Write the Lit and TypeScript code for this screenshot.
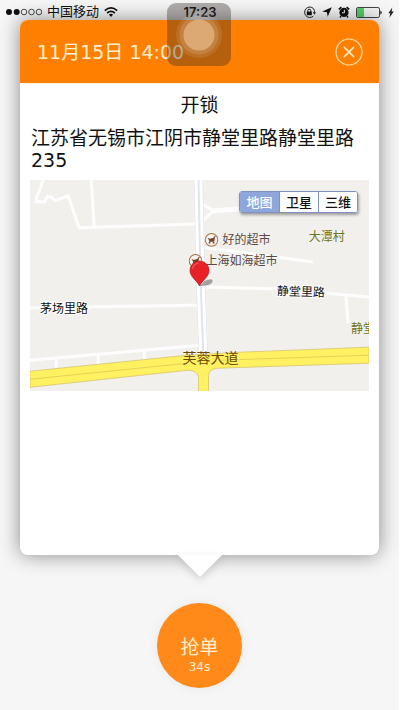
import { LitElement, css, html } from "lit";
import { customElement, state } from "lit/decorators.js";
import { classMap } from "lit/directives/class-map.js";

@customElement("status-bar")
class StatusBar extends LitElement {
  static styles = css`
    :host {
      display: grid;
      grid-template-columns: 1fr auto 1fr;
      align-items: center;
      height: 20px;
      padding: 3px 5px 0 6px;
      box-sizing: border-box;
      font: 13px/18px "Liberation Sans", "Noto Sans CJK SC", sans-serif;
      color: #111;
    }
    .side {
      display: flex;
      align-items: center;
      gap: 5px;
    }
    .right {
      justify-content: flex-end;
      gap: 6px;
    }
    .time {
      font-family: Inter, sans-serif;
      font-weight: 600;
      font-size: 13px;
    }
    svg {
      display: block;
    }
  `;
  render() {
    return html`
      <div class="side">
        <svg width="36" height="8" viewBox="0 0 36 8" aria-hidden="true">
          <g fill="#111"><circle cx="3" cy="4" r="3" /><circle cx="10.7" cy="4" r="3" /></g>
          <g fill="none" stroke="#222" stroke-width=".8">
            <circle cx="18" cy="4" r="2.8" /><circle cx="25.5" cy="4" r="2.8" /><circle cx="33" cy="4" r="2.8" />
          </g>
        </svg>
        <span>中国移动</span>
        <svg width="14" height="10" viewBox="0 0 14 10" aria-hidden="true">
          <g fill="none" stroke="#111" stroke-width="1.7">
            <path d="M.8 3.6Q7-1.8 13.2 3.6" /><path d="M3.1 6Q7 2.6 10.9 6" />
          </g>
          <path d="M4.9 7.6Q7 5.9 9.1 7.6L7 9.9z" fill="#111" />
        </svg>
      </div>
      <span class="time">17:23</span>
      <div class="side right">
        <svg width="13" height="13" viewBox="0 0 13 13" aria-hidden="true">
          <path d="M10.4 2.5A5.2 5.2 0 1 0 10.2 10.2" fill="none" stroke="#222" />
          <path d="M10.4 2.5A5.2 5.2 0 0 1 11.4 6.5" fill="none" stroke="#222" />
          <path d="M9.8 6.3h3.2l-1.6 2.4z" fill="#222" />
          <rect x="3.8" y="5.6" width="5" height="3.6" fill="#111" />
          <path d="M4.8 6V4.7a1.5 1.5 0 0 1 3 0V6" fill="none" stroke="#111" />
        </svg>
        <svg width="10" height="10" viewBox="0 0 10 10" aria-hidden="true">
          <path d="M9.8.3L5.7 9.8 4.9 5.3.2 4.6z" fill="#111" />
        </svg>
        <svg width="12" height="12" viewBox="0 0 12 12" aria-hidden="true">
          <circle cx="6" cy="6.4" r="4.6" fill="#111" />
          <path d="M.8 3.3L3.4 1.1M11.2 3.3L8.600 1.1M3 10.2l-1 1.2M9 10.2l1 1.2" stroke="#111" stroke-width="1.6" />
          <path d="M6.4 3.800v3H4" fill="none" stroke="#eee" />
        </svg>
        <svg width="26" height="11" viewBox="0 0 26 11" aria-hidden="true">
          <rect x=".5" y=".5" width="23" height="10" rx="1.6" fill="#f2f2f2" stroke="#444" />
          <rect x="1" y="1" width="7" height="9" rx="1" fill="#4fd064" />
          <path d="M24.3 3.4q1.4.3 1.4 2.1t-1.4 2.1z" fill="#222" />
        </svg>
        <svg width="6" height="11" viewBox="0 0 6 11" aria-hidden="true">
          <path d="M4.3.4L.3 6.3h2L1.4 10.7 5.8 4.6H3.6z" fill="#222" />
        </svg>
      </div>
    `;
  }
}

@customElement("order-map")
class OrderMap extends LitElement {
  @state() private mode = "地图";

  static styles = css`
    :host {
      display: block;
      position: relative;
    }
    .canvas {
      display: block;
      width: 100%;
      height: 211px;
      background: #f1f0ed;
      font: 12px "Noto Sans CJK SC", sans-serif;
    }
    .road {
      fill: none;
      stroke: #fdfdfd;
      stroke-width: 3;
    }
    .poi {
      fill: #5c4a42;
    }
    .street {
      fill: #111;
      stroke: #fff;
      stroke-width: 2;
      paint-order: stroke;
    }
    .village {
      fill: #6f7420;
    }
    .avenue {
      fill: #6e4c08;
      font-size: 14px;
    }
    .modes {
      position: absolute;
      top: 11px;
      right: 11px;
      display: flex;
      border: 1px solid #8191bd;
      border-radius: 3px;
      overflow: hidden;
      box-shadow: 1px 2px 3px rgba(0, 0, 0, 0.35);
    }
    .mode {
      width: 39px;
      height: 20px;
      padding: 0;
      border: 0;
      border-left: 1px solid #8191bd;
      background: #fff;
      color: #111;
      font: 500 13px/20px "Noto Sans CJK SC", sans-serif;
    }
    .mode:first-child {
      border-left: 0;
    }
    .active {
      background: #8ea6dc;
      color: #fff;
    }
  `;
  render() {
    const cart = (x: number, y: number) => {
      return html`<svg x=${x} y=${y} width="14" height="14" viewBox="0 0 14 14">
        <circle cx="7" cy="7" r="6.3" fill="#f7f2ec" stroke="#a3724e" />
        <path d="M10.900 3.300L9.800 4.400 9.300 8.500H4.600" fill="none" stroke="#704326" />
        <path d="M3 5l2.400 1L9.800 4.600 9.300 8.200H5z" fill="#704326" />
        <circle cx="5" cy="9.800" r=".9" fill="#704326" /><circle cx="9" cy="9.800" r=".9" fill="#704326" />
      </svg>`;
    };
    return html`
      <svg class="canvas" viewBox="0 0 338 211" preserveAspectRatio="xMidYMid slice" role="img" aria-label="地图">
        <g class="road">
          <path d="M13 0L10 10 7 16 6 22 15 22 17 17 21 17 25 21 38 16 49 48 172 44" />
          <path d="M61 0L64 47" />
          <path d="M168 22L183 31 168 45" />
          <path d="M183 31L212 29" stroke-width="5" />
          <path d="M170 67L282 82" />
          <path d="M0 128L172 125" />
          <path d="M172 107L250 109 338 117M315 115L317 143" />
          <path d="M0 180L170 165M26 178V187M68 174V184M114 169V179" />
        </g>
        <path d="M168 0L170 100 173 180" fill="none" stroke="#dfe2e9" stroke-width="9" />
        <path d="M168 0L170 100 173 180" fill="none" stroke="#fff" stroke-width="8" />
        <path d="M168 0L170 100 173 180" fill="none" stroke="#e0e4ee" stroke-width="2" />
        <path
          d="M0 191L157 175 210 172 338 167V183L186 188Q178 189 178 196V211H168V197Q167 190 157 190L0 207z"
          fill="#fff161"
          stroke="#d8c56a"
          stroke-width=".8"
        />
        <path d="M0 199L157 183M190 180L338 175" stroke="#dccb55" stroke-width=".8" />
        ${cart(174, 53)} ${cart(158, 74)}
        <text class="poi" x="192" y="64">好的超市</text>
        <text class="poi" x="175" y="85">上海如海超市</text>
        <text class="village" x="278" y="61">大潭村</text>
        <text class="village" x="320" y="153">静堂</text>
        <text class="street" x="246" y="115" transform="rotate(2 246 115)">静堂里路</text>
        <text class="street" x="10" y="133">茅场里路</text>
        <text class="avenue" x="152" y="183">芙蓉大道</text>
        <path d="M169 106L174 101Q183 97 182 102 180 106 169 106z" fill="#777" opacity=".65" />
        <path d="M169 106C167 101 159.500 97 159.500 90.500A9.500 9.500 0 0 1 178.500 90.500C178.500 97 171 101 169 106z" fill="#e82127" stroke="#b9191e" stroke-width=".7" />
        <path d="M162 89Q163 84 168 83" fill="none" stroke="#f0595c" stroke-width="1.200" />
      </svg>
      <div class="modes">
        ${["地图", "卫星", "三维"].map(
          (name) => html`<button
            class=${classMap({ mode: true, active: name === this.mode })}
            aria-pressed=${name === this.mode}
            @click=${() => (this.mode = name)}
          >${name}</button>`
        )}
      </div>
    `;
  }
}

@customElement("app-root")
class AppRoot extends LitElement {
  static styles = css`
    :host {
      display: flex;
      flex-direction: column;
      min-height: 100vh;
      box-sizing: border-box;
      position: relative;
      background: #f6f6f6;
      border-right: 1px solid #fff;
      font-family: "DejaVu Sans", "Noto Sans CJK SC", sans-serif;
    }
    .bar {
      position: relative;
    }
    .card {
      flex: 1;
      display: flex;
      flex-direction: column;
      position: relative;
      margin: 0 20px;
      border-radius: 8px;
      background: #fff;
      box-shadow: 0 0 20px rgba(0, 0, 0, 0.45);
    }
    .head {
      display: flex;
      align-items: center;
      justify-content: space-between;
      height: 63px;
      padding: 0 16px 0 17px;
      border-radius: 8px 8px 0 0;
      border-bottom: 1px solid #fff3d8;
      background: #ff8000;
      color: #fff0d0;
    }
    .date {
      margin: 0;
      font-size: 19px;
      font-weight: 400;
      line-height: 24px;
    }
    .close {
      width: 28px;
      height: 28px;
      padding: 0;
      border: 0;
      background: none;
    }
    .close svg {
      display: block;
    }
    .body {
      padding: 10px;
      color: #111;
      font-size: 19px;
      line-height: 22px;
    }
    .kind {
      margin: 0 0 11px;
      font-size: 19px;
      font-weight: 400;
      text-align: center;
    }
    .address {
      margin: 0 0 9px;
      padding: 0 1px;
    }
    .tail {
      position: absolute;
      top: 100%;
      left: 50%;
      margin-left: -22px;
      filter: drop-shadow(0 3px 4px rgba(0, 0, 0, 0.15));
    }
    .foot {
      display: flex;
      justify-content: center;
      padding: 48px 0 22px;
    }
    .grab {
      display: flex;
      flex-direction: column;
      align-items: center;
      width: 85px;
      height: 85px;
      padding: 32px 0 0;
      border: 0;
      border-radius: 50%;
      background: #ff8a1a;
      box-shadow: 0 0 12px rgba(0, 0, 0, 0.06);
      color: #fff0d0;
      font-family: inherit;
      font-size: 19px;
      line-height: 24px;
    }
    .count {
      font-size: 12px;
      line-height: 16px;
    }
    .assist {
      position: absolute;
      top: 3px;
      left: 50%;
      width: 64px;
      height: 63px;
      margin-left: -33px;
      padding: 0;
      border: 0;
      border-radius: 9px;
      background: rgba(50, 40, 35, 0.36);
    }
    .assist svg {
      display: block;
    }
  `;
  render() {
    return html`
      <status-bar class="bar"></status-bar>
      <main class="card">
        <header class="head">
          <h1 class="date">11月15日 14:00</h1>
          <button class="close" aria-label="关闭">
            <svg width="28" height="28" viewBox="0 0 28 28">
              <circle cx="14" cy="14" r="13" fill="none" stroke="#ffe0ae" stroke-width="1.200" />
              <path d="M9 9L19 19M19 9L9 19" stroke="#fff3dc" stroke-width="1.600" />
            </svg>
          </button>
        </header>
        <section class="body">
          <h2 class="kind">开锁</h2>
          <p class="address">江苏省无锡市江阴市静堂里路静堂里路235</p>
          <order-map></order-map>
        </section>
        <svg class="tail" width="44" height="22" viewBox="0 0 44 22" aria-hidden="true">
          <path d="M0 0H44L22 22z" fill="#fff" />
        </svg>
      </main>
      <footer class="foot">
        <button class="grab">抢单<span class="count">34s</span></button>
      </footer>
      <button class="assist" aria-label="辅助触控">
        <svg width="64" height="63" viewBox="0 0 64 63">
          <circle cx="32" cy="32" r="23" fill="#fff" opacity=".1" />
          <circle cx="32" cy="32" r="19.500" fill="#fff" opacity=".13" />
          <circle cx="32" cy="32" r="15.500" fill="#e9bd90" opacity=".65" />
        </svg>
      </button>
    `;
  }
}
